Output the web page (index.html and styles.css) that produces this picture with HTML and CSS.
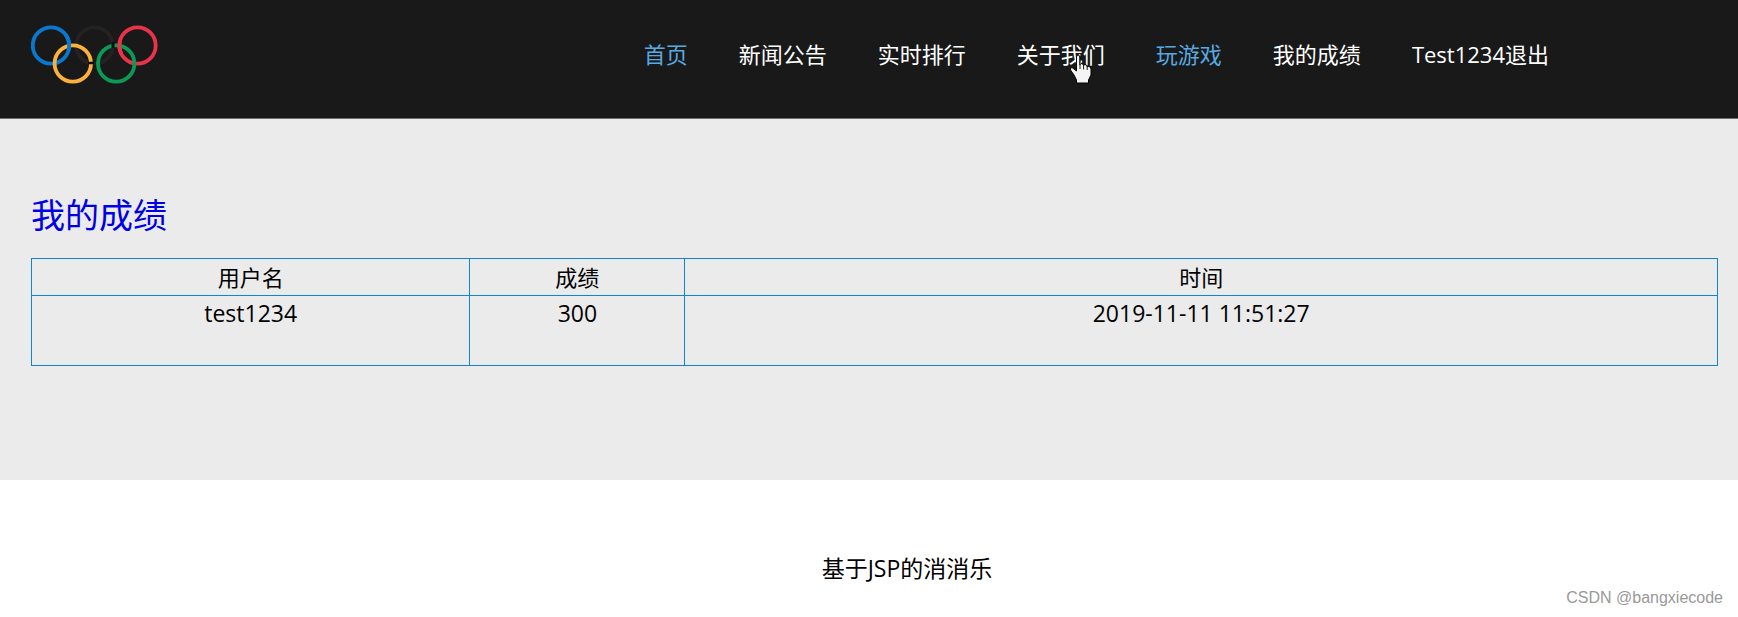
FILE: index.html
```html
<!DOCTYPE html>
<html lang="zh-CN">
<head>
    <meta charset="UTF-8">
    <meta name="viewport" content="width=device-width, initial-scale=1.0">
    <title>我的成绩</title>
    <link rel="stylesheet" href="styles.css">
</head>
<body>

    <header class="header">
        <a href="#" class="logo" aria-label="首页">
            <svg width="128" height="60" viewBox="0 0 128 60" fill="none" stroke-width="3.8">
                <circle cx="63.5" cy="20.5" r="18.2" stroke="#242223"/>
                <circle cx="20" cy="20.5" r="18.2" stroke="#0b78cf"/>
                <circle cx="106.5" cy="20.5" r="18.2" stroke="#e8334a"/>
                <circle cx="41.8" cy="38.5" r="18.2" stroke="#fbb13c"/>
                <circle cx="85.2" cy="38.5" r="18.2" stroke="#0a9a55"/>
                <!-- ring overlaps -->
                <path d="M34.5 9.5A18.2 18.2 0 0 1 37.5 25" stroke="#0b78cf"/>
                <path d="M89 16A18.2 18.2 0 0 0 90.5 29" stroke="#e8334a"/>
                <path d="M57 38H63" stroke="#0c0c0c" stroke-width="2.5"/>
                <path d="M82 17V23" stroke="#0c0c0c" stroke-width="3"/>
            </svg>
        </a>
        <nav class="nav">
            <a href="#" class="active">首页</a>
            <a href="#">新闻公告</a>
            <a href="#">实时排行</a>
            <a href="#" class="hovered">关于我们
                <svg class="cursor" width="24" height="31" viewBox="0 0 24 31">
                    <path d="M7.500 3Q7.500 1 9 1T10.800 3V11L12 9.500Q14 9 14.500 11.500L16 10.500Q18 10.500 18.200 13L19.500 12.500Q22 12.500 22 15V21L19.500 26V29H7.500V26L5 21L1.500 16Q1 13.500 3 13.500L7.500 17Z" fill="#f4f4f4" stroke="#000" stroke-width="1"/>
                    <path d="M11 11V15M14.600 11.500V15.500M18.200 13V16" stroke="#222"/>
                </svg>
            </a>
            <a href="#" class="active">玩游戏</a>
            <a href="#">我的成绩</a>
            <a href="#">Test1234退出</a>
        </nav>
    </header>

    <main class="content">
        <h2 class="title"><a href="#">我的成绩</a></h2>
        <table class="score-table">
            <thead>
                <tr>
                    <th class="col-name">用户名</th>
                    <th class="col-score">成绩</th>
                    <th>时间</th>
                </tr>
            </thead>
            <tbody>
                <tr>
                    <td>test1234</td>
                    <td>300</td>
                    <td>2019-11-11 11:51:27</td>
                </tr>
            </tbody>
        </table>
    </main>

    <footer class="footer">
        <p>基于JSP的消消乐</p>
        <span class="watermark">CSDN @bangxiecode</span>
    </footer>

</body>
</html>
```

FILE: styles.css
```css
* {
    box-sizing: border-box;
}

body {
    margin: 0;
    font-family: "Open Sans", "Noto Sans CJK SC", sans-serif;
    font-size: 23px;
    line-height: 34px;
    color: #000;
    background-color: #fff;
}

a {
    text-decoration: none;
}

.header {
    display: flex;
    justify-content: space-between;
    align-items: flex-start;
    height: 119px;
    padding: 25px 189px 0 31px;
    background-color: #191919;
    border-bottom: 1px solid #6c6a6a;
}

.logo svg {
    display: block;
}

.nav {
    display: flex;
    gap: 51px;
    padding-top: 12px;
    font-size: 22px;
}

.nav a {
    color: #fff;
    white-space: nowrap;
}

.nav .active {
    color: #57a9e0;
}

.hovered {
    position: relative;
}

/* hand pointer over the hovered item */
.cursor {
    position: absolute;
    right: 12px;
    top: 17px;
}

.content {
    padding: 71px 20px 114px 31px;
    background-color: #ebebeb;
}

.title {
    margin: 0 0 18px;
    font-size: 34px;
    font-weight: normal;
    line-height: 50px;
}

.title a {
    color: #0000e6;
}

.score-table {
    width: 100%;
    border-collapse: collapse;
    table-layout: fixed;
    text-align: center;
}

.score-table th,
.score-table td {
    padding: 0;
    border: 1px solid #0f84dc;
    font-weight: normal;
}

.score-table th {
    height: 37px;
    font-size: 22px;
}

.score-table td {
    height: 70px;
    vertical-align: top;
}

.col-name {
    width: 26%;
}

.col-score {
    width: 215px;
}

.footer {
    position: relative;
    padding: 71px 0 32px 76px;
    text-align: center;
}

.footer p {
    margin: 0;
}

.watermark {
    position: absolute;
    right: 15px;
    bottom: 8px;
    font-family: "Liberation Sans", sans-serif;
    font-size: 16px;
    line-height: 22px;
    color: #999;
}
```
